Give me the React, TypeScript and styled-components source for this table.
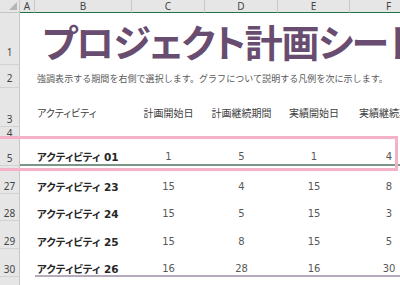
import React from 'react';
import styled, { createGlobalStyle } from 'styled-components';

const COLS = '20px 15px 97px 73px 73px 72px 78px';

const GlobalStyle = createGlobalStyle`
  html, body { margin: 0; padding: 0; background: #fff; overflow: hidden; }
  * { box-sizing: border-box; }
`;

const Sheet = styled.div`
  position: relative;
  width: 400px;
  height: 285px;
  overflow: hidden;
  background: #fff;
  font-family: "DejaVu Sans", "Noto Sans CJK JP", sans-serif;
  font-feature-settings: "palt";
`;

const Row = styled.div<{ $h: number; $pb?: number }>`
  display: grid;
  grid-template-columns: ${COLS};
  height: ${(p) => p.$h}px;
  flex-shrink: 0;
  --pb: ${(p) => p.$pb ?? 1}px;
`;

const Corner = styled.div`
  position: relative;
  background: #e6e6e6;
  border-right: 1px solid #c6c6c6;
  border-bottom: 1px solid #c6c6c6;
  &::after {
    content: '';
    position: absolute;
    right: 2px;
    bottom: 2px;
    border-style: solid;
    border-width: 0 0 8px 8px;
    border-color: transparent transparent #b5b5b5 transparent;
  }
`;

const ColHead = styled.div`
  background: #e6e6e6;
  border-right: 1px solid #c9c9c9;
  border-bottom: 1px solid #217346;
  display: flex;
  align-items: center;
  justify-content: center;
  font-family: "Noto Sans", sans-serif;
  font-size: 10px;
  color: #444;
  line-height: 1;
`;

const RowHead = styled.div<{ $pb?: number }>`
  background: #e6e6e6;
  border-right: 1px solid #c6c6c6;
  border-bottom: 1px solid #d2d2d2;
  display: flex;
  align-items: flex-end;
  justify-content: center;
  padding-bottom: ${(p) => p.$pb ?? 1}px;
  font-family: "Noto Sans", sans-serif;
  font-size: 10px;
  color: #444;
  line-height: 12px;
`;

type Line = 'none' | 'hidden' | 'total';

const lineCss: Record<Line, string> = {
  none: 'none',
  hidden: '2px solid #7a9686',
  total: '2px solid #b5abbc',
};

const Cell = styled.div<{ $span?: number; $center?: boolean; $line?: Line }>`
  grid-column: span ${(p) => p.$span ?? 1};
  display: flex;
  align-items: flex-end;
  justify-content: ${(p) => (p.$center ? 'center' : 'flex-start')};
  padding: 0 2px var(--pb);
  white-space: nowrap;
  min-width: 0;
  border-bottom: ${(p) => lineCss[p.$line ?? 'none']};
`;

const Title = styled.span`
  font-family: "Noto Sans CJK JP", sans-serif;
  font-weight: 700;
  font-size: 38px;
  line-height: 1;
  letter-spacing: -1.3px;
  color: #694d70;
  margin-left: 5px;
`;

const Subtitle = styled.span`
  font-family: "Noto Sans CJK JP", sans-serif;
  font-feature-settings: normal;
  font-size: 9px;
  line-height: 12px;
  letter-spacing: 0.05px;
  color: #595959;
`;

const HeadText = styled.span`
  font-family: "Noto Sans CJK JP", sans-serif;
  font-size: 10px;
  line-height: 12px;
  color: #404040;
`;

const Name = styled.span`
  font-weight: 700;
  font-size: 10.5px;
  line-height: 12px;
  color: #262626;
`;

const Num = styled.span`
  font-size: 10px;
  line-height: 12px;
  color: #595959;
`;

const Highlight = styled.div`
  position: absolute;
  top: 136px;
  left: -6px;
  width: 404px;
  height: 35px;
  border: 3px solid #f3b2c7;
  pointer-events: none;
`;

const letters = ['A', 'B', 'C', 'D', 'E', 'F'];
const headers = ['計画開始日', '計画継続期間', '実績開始日', '実績継続期間'];

const activities = [
  { row: 5, name: 'アクティビティ 01', v: [1, 5, 1, 4], h: 29, line: 'hidden' as Line, pb: 1 },
  { row: 27, name: 'アクティビティ 23', v: [15, 4, 15, 8], h: 28, line: 'none' as Line, pb: 1 },
  { row: 28, name: 'アクティビティ 24', v: [15, 5, 15, 3], h: 27, line: 'none' as Line, pb: 1 },
  { row: 29, name: 'アクティビティ 25', v: [15, 8, 15, 5], h: 28, line: 'none' as Line, pb: 1 },
  { row: 30, name: 'アクティビティ 26', v: [16, 28, 16, 30], h: 28, line: 'total' as Line, pb: 0 },
];

export default function App() {
  return (
    <>
      <GlobalStyle />
      <Sheet>
        <Row $h={13}>
          <Corner />
          {letters.map((l) => (
            <ColHead key={l}>{l}</ColHead>
          ))}
        </Row>

        <Row $h={52} $pb={5}>
          <RowHead $pb={6}>1</RowHead>
          <Cell />
          <Cell $span={5}>
            <Title>プロジェクト計画シート</Title>
          </Cell>
        </Row>

        <Row $h={23} $pb={3}>
          <RowHead $pb={3}>2</RowHead>
          <Cell />
          <Cell $span={5}>
            <Subtitle>強調表示する期間を右側で選択します。グラフについて説明する凡例を次に示します。</Subtitle>
          </Cell>
        </Row>

        <Row $h={39} $pb={8}>
          <RowHead>3</RowHead>
          <Cell />
          <Cell>
            <HeadText>アクティビティ</HeadText>
          </Cell>
          {headers.map((t) => (
            <Cell key={t} $center>
              <HeadText>{t}</HeadText>
            </Cell>
          ))}
        </Row>

        <Row $h={10}>
          <RowHead $pb={0}>4</RowHead>
        </Row>

        {activities.map((a) => (
          <Row key={a.row} $h={a.h} $pb={a.pb}>
            <RowHead>{a.row}</RowHead>
            <Cell $line={a.line === 'hidden' ? 'hidden' : 'none'} />
            <Cell $line={a.line}>
              <Name>{a.name}</Name>
            </Cell>
            {a.v.map((n, i) => (
              <Cell key={i} $center $line={a.line}>
                <Num>{n}</Num>
              </Cell>
            ))}
          </Row>
        ))}

        <Row $h={28}>
          <RowHead>31</RowHead>
        </Row>

        <Highlight />
      </Sheet>
    </>
  );
}
